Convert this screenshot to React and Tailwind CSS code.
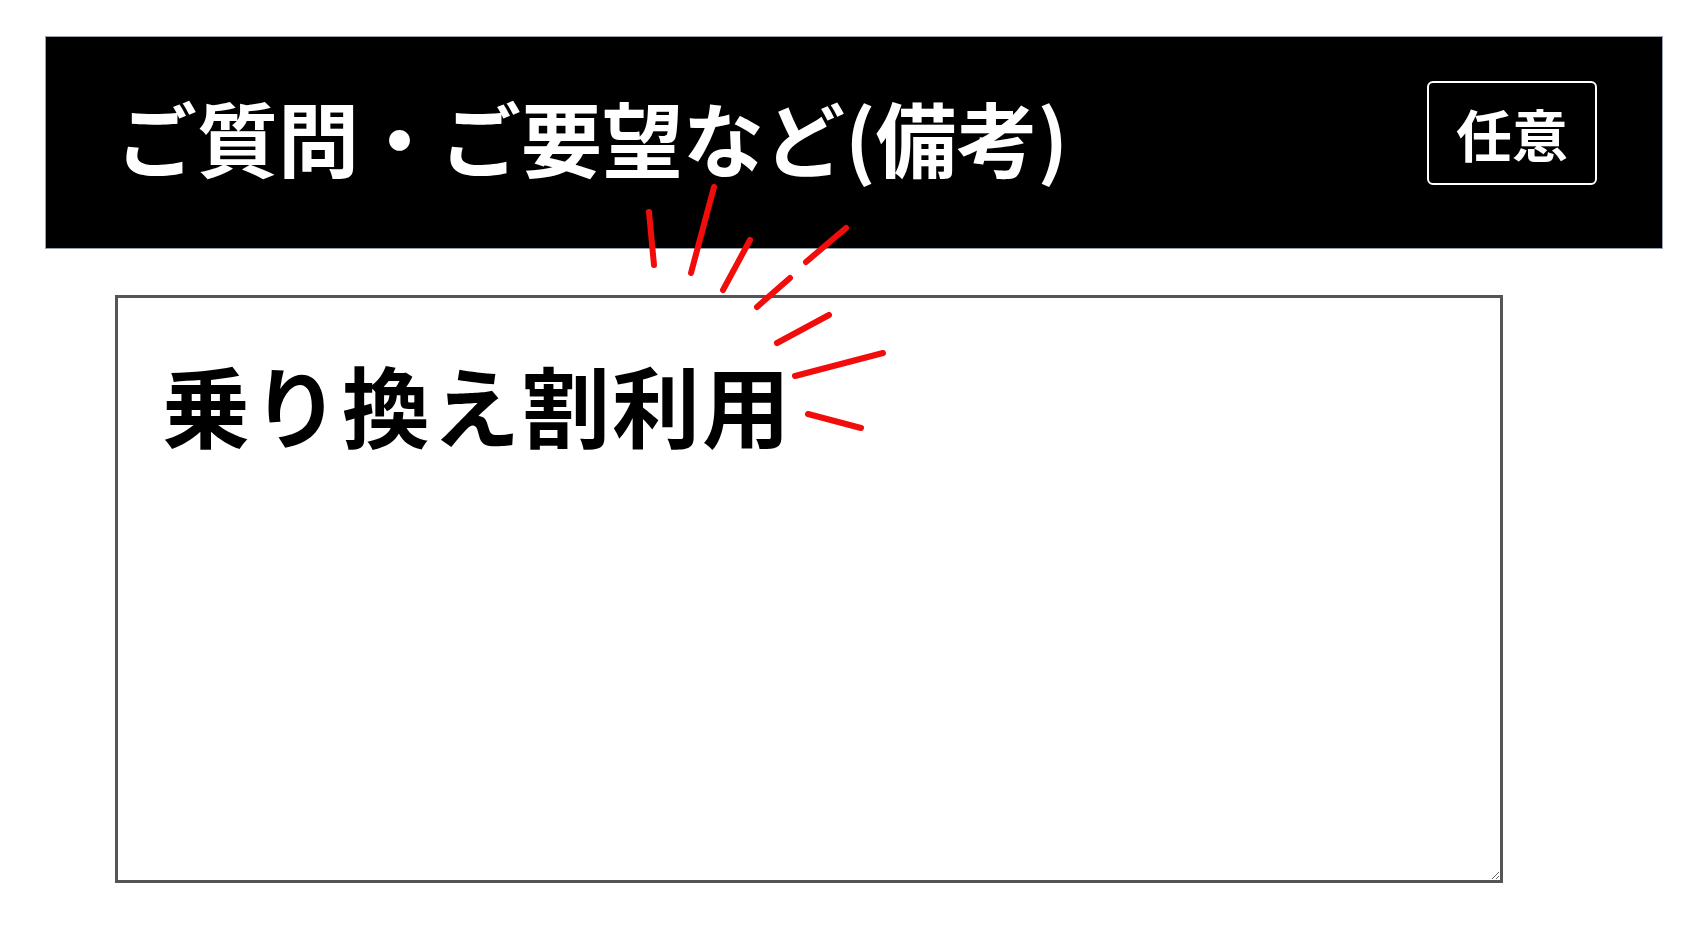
import React from 'react';

const jp = { fontFamily: '"Noto Sans CJK JP", "Noto Sans", sans-serif' };

// red "emphasis" strokes drawn over the form
const rays = [
  [649, 212, 654, 265],
  [714, 187, 691, 273],
  [750, 240, 723, 290],
  [846, 228, 806, 262],
  [790, 278, 757, 307],
  [829, 315, 777, 343],
  [883, 353, 795, 376],
  [808, 414, 861, 428],
];

const App = () => {
  return (
    <div className="relative w-[1700px] h-[925px] bg-white overflow-hidden" style={jp}>
      <div className="pl-[45px] pt-[36px]">
        {/* Header band */}
        <div className="w-[1618px] h-[213px] bg-black border border-gray-400 flex items-center justify-between pl-[70px] pr-[65px]">
          <h2 className="text-[81px] font-bold text-white leading-none -mt-[14px]">ご質問・ご要望など(備考)</h2>
          <span className="border-2 border-white rounded-[6px] h-[104px] px-[27px] flex items-center text-[56px] font-bold text-white leading-none -mt-[20px]">
            任意
          </span>
        </div>

        {/* Textarea */}
        <div className="ml-[70px] mt-[46px]">
          <textarea
            className="block w-[1388px] h-[588px] border-[3px] border-[#555] bg-white pl-[44px] pt-[61px] text-[88px] font-bold leading-none tracking-[2px] text-black outline-none"
            style={jp}
            defaultValue="乗り換え割利用"
          />
        </div>
      </div>

      <svg className="absolute inset-0 pointer-events-none" width="1700" height="925">
        {rays.map(([x1, y1, x2, y2], i) => (
          <line key={i} x1={x1} y1={y1} x2={x2} y2={y2} stroke="#f20d0d" strokeWidth="6" strokeLinecap="round" />
        ))}
      </svg>
    </div>
  );
};

export default App;
